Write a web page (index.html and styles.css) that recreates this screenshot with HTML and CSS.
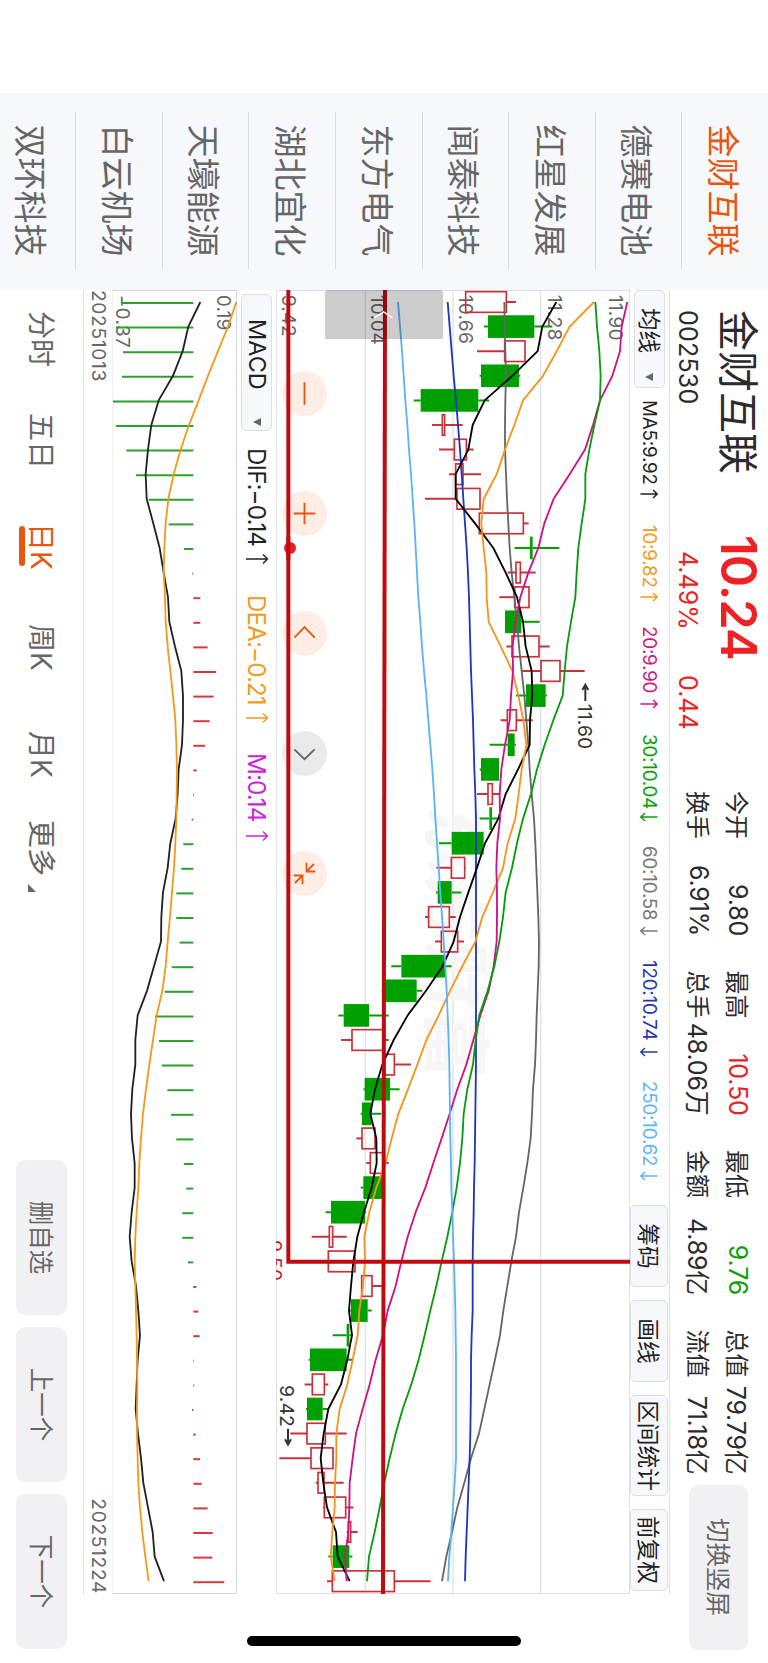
FILE: index.html
```html
<!DOCTYPE html>
<html lang="zh-CN">
<head>
    <meta charset="UTF-8">
    <meta name="viewport" content="width=device-width, initial-scale=1.0">
    <title>金财互联 002530</title>
    <link rel="stylesheet" href="styles.css">
</head>
<body>
    <div class="phone">
        <div class="screen">
            <div class="stock-list">
                <div class="stock active">金财互联</div>
                <div class="stock">德赛电池</div>
                <div class="stock">红星发展</div>
                <div class="stock">闻泰科技</div>
                <div class="stock">东方电气</div>
                <div class="stock">湖北宜化</div>
                <div class="stock">天壕能源</div>
                <div class="stock">白云机场</div>
                <div class="stock">双环科技</div>
            </div>

            <div class="main">
                <div class="quote">
                    <div class="quote-name">
                        <h1>金财互联</h1>
                        <span>002530</span>
                    </div>
                    <div class="quote-price">
                        <strong>10.24</strong>
                        <div><span class="percent">4.49%</span><span>0.44</span></div>
                    </div>
                    <div class="quote-info">
                        <div class="info"><span>今开</span><b>9.80</b></div>
                        <div class="info"><span>最高</span><b class="up">10.50</b></div>
                        <div class="info"><span>最低</span><b class="down">9.76</b></div>
                        <div class="info"><span>总值</span><b>79.79亿</b></div>
                        <div class="info"><span>换手</span><b>6.91%</b></div>
                        <div class="info"><span>总手</span><b>48.06万</b></div>
                        <div class="info"><span>金额</span><b>4.89亿</b></div>
                        <div class="info"><span>流值</span><b>71.18亿</b></div>
                    </div>
                    <button class="btn switch">切换竖屏</button>
                </div>

                <div class="ma-bar">
                    <button class="select">均线<i class="caret"></i></button>
                    <div class="ma ma5"><span>MA5:9.92</span><svg class="arrow" viewBox="0 0 10 18"><path d="M5 17.500V.5M1 5L5 .8L9 5"/></svg></div>
                    <div class="ma ma10"><span>10:9.82</span><svg class="arrow" viewBox="0 0 10 18"><path d="M5 17.500V.5M1 5L5 .8L9 5"/></svg></div>
                    <div class="ma ma20"><span>20:9.90</span><svg class="arrow" viewBox="0 0 10 18"><path d="M5 17.500V.5M1 5L5 .8L9 5"/></svg></div>
                    <div class="ma ma30"><span>30:10.04</span><svg class="arrow" viewBox="0 0 10 18"><path d="M5 .5V17.500M1 13L5 17.200L9 13"/></svg></div>
                    <div class="ma ma60"><span>60:10.58</span><svg class="arrow" viewBox="0 0 10 18"><path d="M5 .5V17.500M1 13L5 17.200L9 13"/></svg></div>
                    <div class="ma ma120"><span>120:10.74</span><svg class="arrow" viewBox="0 0 10 18"><path d="M5 .5V17.500M1 13L5 17.200L9 13"/></svg></div>
                    <div class="ma ma250"><span>250:10.62</span><svg class="arrow" viewBox="0 0 10 18"><path d="M5 .5V17.500M1 13L5 17.200L9 13"/></svg></div>
                    <div class="tools">
                        <button class="tool">筹码</button>
                        <button class="tool">画线</button>
                        <button class="tool wide">区间统计</button>
                        <button class="tool">前复权</button>
                    </div>
                </div>

                <div class="kline">
                    <svg id="kline" viewBox="0 0 3912 1062"></svg>
                    <div class="controls">
                        <button class="round"><svg viewBox="-34 -34 68 68"><path d="M-33 0H33"/></svg></button>
                        <button class="round"><svg viewBox="-34 -34 68 68"><path d="M-32 0H32M0 -32V32"/></svg></button>
                        <button class="round"><svg viewBox="-34 -34 68 68"><path d="M12 -30L-19 0L12 30"/></svg></button>
                        <button class="round disabled"><svg viewBox="-34 -34 68 68"><path d="M-12 -30L17 0L-12 30"/></svg></button>
                        <button class="round"><svg viewBox="-34 -34 68 68"><path d="M-32 -6H-6V-32M-6 -6L-28 -28M32 6H6V32M6 6L28 28"/></svg></button>
                    </div>
                    <svg id="marks" viewBox="0 0 3912 1062"></svg>
                    <div class="drawer"><svg viewBox="0 0 20 58"><path d="M20 1L2 29L20 57"/></svg></div>
                </div>

                <div class="macd-bar">
                    <button class="select macd-select">MACD<i class="caret"></i></button>
                    <div class="ma dif"><span>DIF:−0.14</span><svg class="arrow" viewBox="0 0 12 24"><path d="M6 23V1.500M1.500 6L6 1.500L10.500 6"/></svg></div>
                    <div class="ma dea"><span>DEA:−0.21</span><svg class="arrow" viewBox="0 0 12 24"><path d="M6 23V1.500M1.500 6L6 1.500L10.500 6"/></svg></div>
                    <div class="ma m"><span>M:0.14</span><svg class="arrow" viewBox="0 0 12 24"><path d="M6 23V1.500M1.500 6L6 1.500L10.500 6"/></svg></div>
                </div>

                <div class="macd">
                    <svg id="macd" viewBox="0 0 3912 377"></svg>
                </div>
                <div class="dates"><span>20251013</span><span>20251224</span></div>

                <div class="bottom">
                    <div class="period">分时</div>
                    <div class="period">五日</div>
                    <div class="period active">日K</div>
                    <div class="period week">周K</div>
                    <div class="period month">月K</div>
                    <div class="period more">更多<i></i></div>
                    <div class="actions">
                        <button class="btn">删自选</button>
                        <button class="btn">上一个</button>
                        <button class="btn">下一个</button>
                    </div>
                </div>
            </div>
            <div class="home"></div>
        </div>
    </div>
    <script src="chart.js"></script>
</body>
</html>
```
FILE: styles.css
```css
* {
    box-sizing: border-box;
    margin: 0;
    padding: 0;
}

body {
    background-color: #fff;
    font-family: Inter, "Noto Sans CJK SC", sans-serif;
    color: #2b2b2e;
}

button {
    font-family: inherit;
    border: none;
}

.phone {
    width: 768px;
    height: 1663px;
    overflow: hidden;
}

/* landscape layout turned a quarter clockwise */
.screen {
    width: 1663px;
    height: 768px;
    padding-left: 93px;
    display: flex;
    transform-origin: 0 0;
    transform: translateX(768px) rotate(90deg);
}

.stock-list {
    width: 197px;
    padding: 0 21px 0 19px;
    background-color: #f7f8fb;
    flex-shrink: 0;
}

.stock {
    height: 86.6px;
    border-bottom: 1px solid #dcdde0;
    font-size: 33px;
    line-height: 91px;
    text-align: center;
    white-space: nowrap;
    color: #666;
}

.stock:last-child {
    height: 75px;
    border-bottom: none;
}

.stock.active {
    color: #e8560f;
}

.main {
    flex: 1;
    min-width: 0;
}

/* quote header */
.quote {
    height: 98px;
    display: flex;
}

.quote-name {
    width: 245px;
    padding-left: 20px;
}

.quote-name h1 {
    font-size: 41px;
    font-weight: 400;
    line-height: 60px;
    height: 60px;
}

.quote-name span {
    display: block;
    font-size: 25px;
    line-height: 40px;
    letter-spacing: 0.2px;
}

.quote-price {
    width: 256px;
    color: #ee2224;
}

.quote-price strong {
    display: block;
    font-size: 49px;
    font-weight: 600;
    line-height: 60px;
    height: 60px;
    letter-spacing: -1px;
}

.quote-price div {
    display: flex;
    padding-left: 16px;
    font-size: 25px;
    line-height: 40px;
}

.percent {
    width: 124px;
}

.quote-info {
    display: grid;
    grid-template-columns: repeat(4, 145px);
    grid-template-rows: 39px 39px;
    column-gap: 34.5px;
    padding-top: 10px;
    height: 98px;
}

.info {
    display: flex;
    justify-content: space-between;
    align-items: center;
    font-size: 24px;
    white-space: nowrap;
}

.info b {
    font-weight: 400;
    font-size: 25px;
    letter-spacing: -0.2px;
}

.up {
    color: #ee2224;
}

.down {
    color: #0a9f0a;
}

.btn {
    width: 155px;
    height: 51px;
    border-radius: 9px;
    background-color: #f1f1f4;
    color: #666;
    font-size: 24.5px;
    padding-bottom: 2px;
}

.switch {
    width: 165px;
    height: 59px;
    margin: 20px 0 0 10px;
}

/* moving averages */
.ma-bar {
    width: 1304px;
    height: 40px;
    border-top: 1px solid #dfe0e6;
    display: flex;
    align-items: center;
}

.select {
    width: 98px;
    height: 31px;
    border: 1px solid #dcdfe8;
    border-radius: 5px;
    background-color: #f7f8fb;
    color: #222;
    font-size: 22.5px;
    line-height: 28px;
    display: flex;
    align-items: center;
    padding-left: 17px;
    gap: 20px;
}

.caret {
    border: 4.5px solid transparent;
    border-top: 8px solid #666;
    border-bottom: none;
}

.ma {
    display: flex;
    align-items: center;
    font-size: 18.8px;
    white-space: nowrap;
    letter-spacing: -0.2px;
}

.ma span {
    flex: 1;
}

.arrow {
    width: 10px;
    height: 18px;
    fill: none;
    stroke: currentColor;
    stroke-width: 1.4;
}

.ma5 { width: 99px; margin-left: 12px; color: #222; }
.ma10 { width: 77px; margin-left: 26px; color: #f59a1b; }
.ma20 { width: 83px; margin-left: 24px; color: #cf1688; }
.ma30 { width: 88px; margin-left: 25px; color: #0a9f0a; }
.ma60 { width: 90px; margin-left: 24px; color: #777; }
.ma120 { width: 97px; margin-left: 24px; color: #1f36b8; }
.ma250 { width: 100px; margin-left: 24px; color: #62b5f5; }

.tools {
    display: flex;
    gap: 13px;
    margin-left: auto;
    margin-right: 3px;
}

.tool {
    width: 82px;
    height: 38px;
    border: 1px solid #dcdfe8;
    border-radius: 5px;
    background-color: #f7f8fb;
    color: #222;
    font-size: 22.7px;
    white-space: nowrap;
}

.tool.wide {
    width: 101px;
}

/* candles */
.kline {
    width: 1304px;
    height: 354px;
    position: relative;
}

.kline > svg,
.macd > svg {
    display: block;
    width: 100%;
    height: 100%;
}

#marks {
    position: absolute;
    left: 0;
    top: 0;
}

.controls {
    position: absolute;
    left: 80.5px;
    bottom: 6px;
    display: flex;
    gap: 75px;
}

.round {
    width: 45px;
    height: 45px;
    border-radius: 50%;
    background-color: rgba(253, 233, 222, 0.8);
    display: flex;
    align-items: center;
    justify-content: center;
}

.round svg {
    width: 23px;
    height: 23px;
    fill: none;
    stroke: #e8560f;
    stroke-width: 5.5;
}

.round.disabled {
    background-color: rgba(225, 225, 225, 0.7);
}

.round.disabled svg {
    stroke: #666;
}

.drawer {
    position: absolute;
    left: 0;
    top: 187px;
    width: 49px;
    height: 118px;
    border-radius: 3px 0 0 3px;
    background-color: rgba(0, 0, 0, 0.2);
}

.drawer svg {
    display: block;
    width: 7px;
    height: 19px;
    margin: 50px 0 0 21px;
    fill: none;
    stroke: #fff;
    stroke-width: 4;
}

.label {
    font-size: 58px;
    fill: #666;
    letter-spacing: 0.5px;
}

.mark {
    fill: #333;
}

.mark-red {
    fill: #d0181c;
}

.watermark {
    font-size: 205px;
    font-weight: 700;
    fill: #f6f6f7;
}

/* macd */
.macd-bar {
    width: 1304px;
    height: 38.5px;
    display: flex;
    align-items: center;
}

.macd-select {
    width: 137px;
    margin-left: 4px;
    padding-left: 24px;
    gap: 28px;
    font-size: 23.5px;
}

.macd-bar .ma {
    font-size: 24.2px;
    letter-spacing: -0.9px;
}

.macd-bar .arrow {
    width: 12px;
    height: 24px;
}

.dif { width: 117px; margin-left: 17px; color: #222; }
.dea { width: 129px; margin-left: 30px; color: #f59a1b; }
.m { width: 89px; margin-left: 29px; color: #cc22dd; }

.macd {
    width: 1304px;
    height: 125.7px;
}

.dates {
    width: 1304px;
    height: 29px;
    border-bottom: 1px solid #dfe0e6;
    display: flex;
    justify-content: space-between;
    font-size: 19.3px;
    line-height: 26px;
    letter-spacing: 0.6px;
    color: #666;
}

/* periods */
.bottom {
    height: 83px;
    display: flex;
    align-items: center;
    padding: 0 14px 0 21px;
}

.period {
    width: 102px;
    font-size: 28px;
    line-height: 60px;
    color: #666;
    white-space: nowrap;
    position: relative;
}

.period.active {
    color: #e8560f;
    width: 101px;
    margin-left: 8px;
}

.period.active::after {
    content: "";
    position: absolute;
    left: 3px;
    bottom: 8px;
    width: 40px;
    height: 6px;
    border-radius: 3px;
    background-color: #e8560f;
}

.week {
    width: 107px;
}

.month {
    width: 89px;
}

.more i {
    display: inline-block;
    margin-left: 8px;
    border-left: 8px solid transparent;
    border-bottom: 8px solid #666;
    vertical-align: -3px;
}

.actions {
    display: flex;
    gap: 12px;
    margin-left: auto;
}

.home {
    position: absolute;
    left: 1636px;
    top: 247px;
    width: 10px;
    height: 274px;
    border-radius: 5px;
    background-color: #000;
}
```
FILE: chart.js
```js
const RED = '#c93238';
const GREEN = '#00a000';
const TOP = 1081;
const MACD_TOP = 712;
const ZERO = 581;

// low, body low, body high, high, 1 = up
const candles = [
    [588, 588, 710, 739, 1], [643, 655, 794, 848, 0], [622, 705, 766, 766, 1], [630, 634, 748, 752, 0],
    [432, 453, 626, 658, 0], [487, 518, 525, 579, 1], [508, 554, 590, 612, 1], [538, 558, 580, 634, 1],
    [466, 562, 631, 631, 1], [629, 629, 761, 777, 1], [735, 781, 789, 869, 0], [714, 739, 752, 798, 1],
    [689, 735, 778, 778, 1], [706, 706, 755, 810, 0], [710, 727, 808, 840, 1], [757, 814, 871, 945, 1],
    [739, 769, 828, 832, 0], [693, 713, 740, 789, 1], [660, 714, 735, 739, 0], [630, 634, 688, 688, 0],
    [622, 655, 668, 689, 1], [630, 659, 667, 693, 0], [508, 546, 642, 642, 0], [500, 545, 585, 588, 1],
    [499, 504, 546, 575, 0], [466, 477, 539, 558, 1], [496, 515, 564, 583, 1], [365, 395, 527, 546, 0],
    [336, 344, 441, 458, 0], [206, 222, 298, 357, 0], [214, 247, 340, 357, 1], [340, 345, 374, 424, 1],
    [281, 285, 361, 390, 0], [273, 277, 306, 335, 0], [260, 277, 316, 316, 1], [290, 302, 340, 357, 1],
    [273, 281, 340, 340, 0], [168, 184, 286, 290, 0], [126, 179, 189, 231, 1], [176, 176, 256, 256, 1],
    [276, 276, 307, 340, 1], [240, 244, 294, 306, 0], [189, 231, 239, 248, 0], [117, 121, 231, 248, 0],
    [105, 128, 164, 176, 1], [109, 112, 159, 176, 0], [62, 112, 167, 231, 1], [29, 124, 190, 192, 1],
    [138, 145, 163, 222, 1], [160, 164, 228, 251, 1], [231, 236, 243, 264, 1], [176, 189, 239, 248, 0],
    [172, 188, 374, 483, 1]
];

const averages = {
    '#666': [704, 705, 707, 709, 707, 706, 706, 709, 712, 716, 720, 726, 734, 742, 748, 756, 764, 770, 776, 780, 786, 793, 797, 800, 803, 806, 808, 807, 804, 801, 799, 796, 790, 787, 783, 773, 761, 748, 739, 725, 713, 701, 691, 676, 660, 644, 628, 604, 584, 563, 547, 530, 517],
    '#2135c0': [534, 540, 546, 552, 559, 565, 571, 576, 581, 586, 591, 595, 598, 600, 602, 604, 607, 610, 612, 614, 617, 619, 619, 619, 619, 619, 619, 619, 619, 619, 619, 619, 618, 617, 616, 615, 613, 612, 610, 609, 609, 609, 606, 604, 604, 603, 602, 600, 597, 594, 591, 588, 586],
    '#000': [860, 818, 804, 728, 645, 609, 596, 558, 558, 616, 671, 708, 742, 760, 768, 786, 788, 781, 780, 745, 708, 686, 646, 622, 596, 571, 552, 519, 469, 414, 372, 338, 316, 302, 320, 321, 306, 283, 263, 251, 244, 238, 247, 233, 214, 176, 162, 153, 161, 172, 199, 204, 240],
    '#f7941d': [973, 900, 861, 820, 760, 734, 706, 681, 642, 635, 642, 650, 651, 657, 693, 728, 746, 761, 770, 756, 747, 737, 714, 700, 670, 638, 617, 578, 541, 507, 470, 443, 415, 386, 366, 348, 320, 299, 284, 286, 280, 269, 264, 249, 233, 210, 200, 200, 196, 195, 188, 183, 195],
    '#cf1086': [1073, 1056, 1051, 1028, 991, 970, 946, 900, 852, 824, 806, 776, 752, 738, 729, 730, 724, 720, 706, 695, 690, 691, 683, 680, 682, 682, 681, 672, 657, 632, 611, 590, 563, 540, 516, 491, 467, 438, 414, 395, 378, 354, 340, 318, 300, 279, 259, 249, 240, 239, 236, 226, 231],
    '#089b0d': [977, 982, 989, 993, 991, 974, 959, 947, 947, 936, 926, 921, 917, 904, 892, 885, 879, 851, 825, 802, 784, 760, 742, 727, 708, 700, 689, 674, 654, 629, 618, 610, 593, 582, 578, 571, 561, 548, 533, 516, 500, 482, 465, 447, 425, 399, 378, 360, 344, 330, 315, 298, 292],
    '#5cb3f5': [385, 391, 397, 402, 407, 413, 418, 424, 429, 434, 438, 442, 446, 452, 457, 463, 470, 476, 482, 488, 493, 497, 502, 507, 512, 517, 522, 527, 531, 534, 537, 539, 540, 541, 542, 544, 545, 548, 550, 553, 555, 557, 558, 559, 559, 559, 559, 559, 555, 550, 545, 539, 535]
};

const bars = [367, 349, 370, 367, 340, 349, 380, 409, 447, 507, 553, 578, 602, 602, 624, 649, 642, 630, 616, 591, 583, 576, 551, 545, 530, 530, 540, 516, 495, 466, 478, 487, 503, 514, 530, 553, 560, 548, 548, 565, 590, 596, 600, 583, 584, 577, 588, 601, 606, 624, 639, 638, 674];
const dif = [602, 566, 549, 520, 477, 455, 445, 438, 441, 461, 480, 492, 505, 509, 526, 545, 550, 550, 547, 537, 534, 528, 512, 504, 490, 485, 484, 463, 442, 414, 407, 407, 398, 394, 397, 405, 405, 396, 390, 396, 409, 416, 421, 414, 411, 408, 415, 424, 431, 445, 459, 465, 493];
const dea = [710, 685, 655, 625, 597, 568, 543, 522, 506, 498, 494, 492, 496, 498, 504, 512, 520, 527, 530, 532, 531, 530, 527, 523, 517, 511, 504, 498, 488, 471, 460, 449, 439, 430, 424, 419, 416, 411, 407, 405, 407, 409, 411, 412, 413, 412, 412, 414, 416, 421, 428, 437, 447];

function px(i) {
    return 36 + i * 73.8;
}

function line(values, top, color, width) {
    const points = values.map((v, i) => `${px(i).toFixed(1)},${top - v}`).join(' ');
    return `<polyline points="${points}" fill="none" stroke="${color}" stroke-width="${width}" stroke-linejoin="round"/>`;
}

function text(x, y, value, cls) {
    return `<text x="${x}" y="${y}" class="label ${cls || ''}">${value}</text>`;
}

function drawKline() {
    let out = '<rect x="1.500" y="1.500" width="3909" height="1059" fill="none" stroke="#dfe0e6" stroke-width="3"/>';
    [287, 550, 813].forEach(v => {
        out += `<path d="M0 ${TOP - v}H3912" stroke="#e0e0ea" stroke-width="4"/>`;
    });
    out += '<text x="1545" y="598" class="watermark">东方财富</text>';
    out += text(14, TOP - 1017, '11.90') + text(14, TOP - 835, '11.28') + text(14, TOP - 568, '10.66');
    out += text(14, TOP - 304, '10.04') + text(14, TOP - 38, '9.42');

    candles.forEach(([low, a, b, high, up], i) => {
        const x = px(i);
        const color = up ? RED : GREEN;
        out += `<path d="M${x} ${TOP - high}V${TOP - b}M${x} ${TOP - a}V${TOP - low}" stroke="${color}" stroke-width="6"/>`;
        if (up) {
            out += `<rect x="${x - 31}" y="${TOP - b}" width="62" height="${b - a}" fill="none" stroke="${color}" stroke-width="5"/>`;
        } else {
            out += `<rect x="${x - 34}" y="${TOP - b}" width="68" height="${b - a}" fill="${color}"/>`;
        }
    });
    for (const color in averages) {
        out += line(averages[color], TOP, color, 5.5);
    }
    // highest and lowest price
    out += '<path d="M1233 134H1184M1200 125L1184 134L1200 143" fill="none" stroke="#333" stroke-width="6"/>';
    out += text(1241, TOP - 925, '11.60', 'mark');
    out += text(3285, TOP - 32, '9.42', 'mark');
    out += '<path d="M3416 1026H3464M3448 1017L3464 1026L3448 1035" fill="none" stroke="#333" stroke-width="6"/>';
    out += text(2850, TOP + 5, '9.50', 'mark-red');
    document.getElementById('kline').innerHTML = out;
}

function drawMarks() {
    document.getElementById('marks').innerHTML =
        '<path d="M0 735L3912 741" stroke="#bf0b10" stroke-width="12"/>' +
        '<path d="M0 1025H2915V0" fill="none" stroke="#bf0b10" stroke-width="12"/>' +
        '<circle cx="774" cy="1020" r="18" fill="#ee1c20"/>' +
        '<path d="M740 1025H810" stroke="#bf0b10" stroke-width="12"/>';
}

function drawMacd() {
    let out = '<rect x="1.500" y="1.500" width="3909" height="374" fill="none" stroke="#d5d6de" stroke-width="3"/>';
    out += text(14, MACD_TOP - 653, '0.19') + text(14, MACD_TOP - 349, '−0.37');
    bars.forEach((v, i) => {
        out += `<path d="M${px(i) + 3} ${MACD_TOP - v}V${MACD_TOP - ZERO}" stroke="${v > ZERO ? '#d9383d' : '#2ca02c'}" stroke-width="6"/>`;
    });
    out += line(dif, MACD_TOP, '#222', 5.5) + line(dea, MACD_TOP, '#f59a1b', 5.5);
    document.getElementById('macd').innerHTML = out;
}

drawKline();
drawMarks();
drawMacd();
```
